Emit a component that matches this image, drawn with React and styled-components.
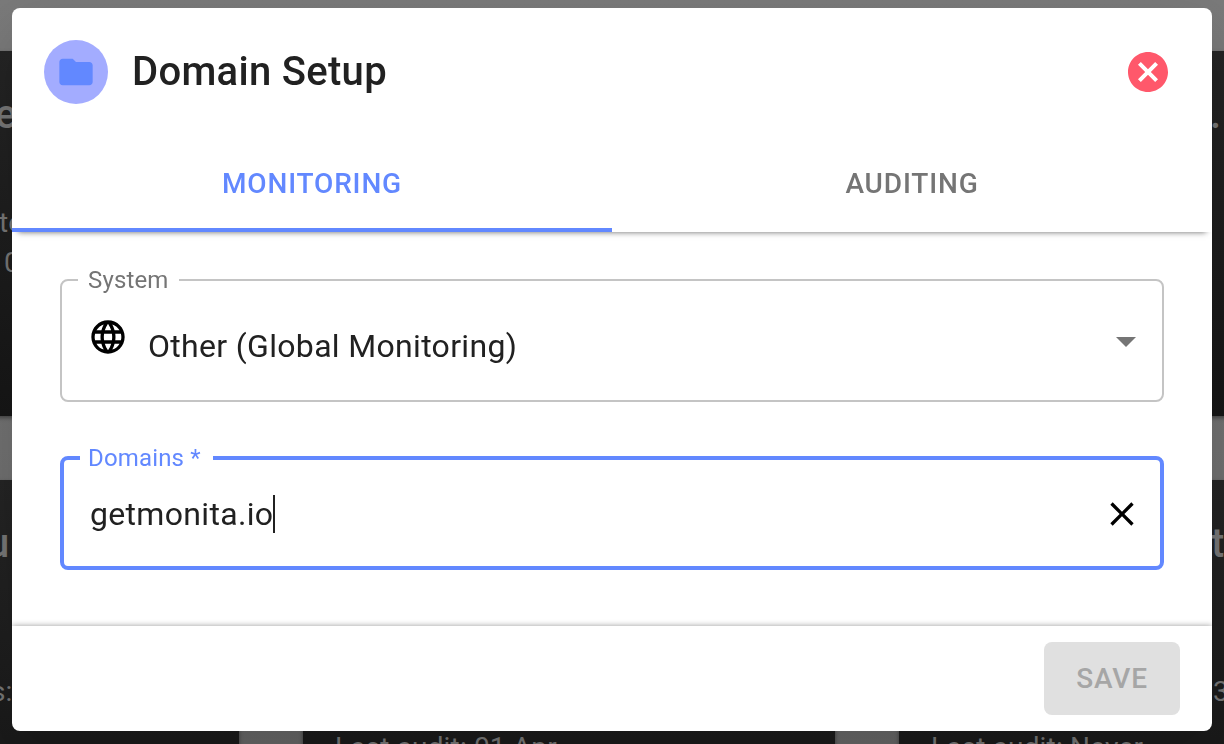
import React from 'react';
import styled, { createGlobalStyle, css } from 'styled-components';
import { MdFolder, MdLanguage, MdArrowDropDown, MdCancel, MdClose } from 'react-icons/md';

const GlobalStyle = createGlobalStyle`
  * { box-sizing: border-box; }
  body {
    margin: 0;
    font-family: Roboto, sans-serif;
    color: #212121;
    letter-spacing: 0.01em;
  }
`;

const Page = styled.div`
  height: 100vh;
  overflow: hidden;
  padding-top: 51px;
  background: linear-gradient(to bottom, #7a7a7a, #707070 60%, #646464);
`;

const CardGrid = styled.div`
  display: grid;
  grid-template-columns: repeat(3, 532px);
  grid-template-rows: 365px 365px;
  gap: 64px;
  margin-left: -293px;
`;

const Card = styled.div`
  padding-top: 40px;
  overflow: hidden;
  white-space: nowrap;
  color: #757575;
  background: linear-gradient(to bottom, #242424, #161616);
  box-shadow: 0 2px 4px rgba(0, 0, 0, 0.4);
`;

const CardTitle = styled.div`
  height: 112px;
  padding-left: ${props => props.$inset || 32}px;
  font-size: 40px;
  font-weight: 500;
  line-height: 48px;
`;

const CardLine = styled.div`
  height: 40px;
  padding-left: ${props => props.$inset || 32}px;
  font-size: 28px;
  line-height: 40px;
`;

const CardSpace = styled.div`
  height: ${props => props.$height}px;
`;

const Overlay = styled.div`
  position: fixed;
  inset: 0;
  padding: 8px 12px 13px;
  display: flex;
`;

const Dialog = styled.form`
  flex: 1;
  display: flex;
  flex-direction: column;
  overflow: hidden;
  background: #fff;
  border-radius: 8px;
  box-shadow: 0 22px 60px rgba(0, 0, 0, 0.15);
`;

const Header = styled.header`
  display: flex;
  align-items: center;
  padding: 32px 40px 32px 32px;
`;

const Avatar = styled.div`
  display: flex;
  align-items: center;
  justify-content: center;
  width: 64px;
  height: 64px;
  border-radius: 50%;
  background: #a3acff;
  color: #6288ff;
  font-size: 40px;
`;

const Title = styled.h2`
  flex: 1;
  margin: 0 0 0 24px;
  font-size: 40px;
  font-weight: 500;
  line-height: 64px;
  letter-spacing: 0.0075em;
`;

const IconButton = styled.button`
  display: flex;
  padding: 0;
  border: 0;
  background: none;
  color: ${props => props.$color};
  font-size: ${props => props.$size}px;
  cursor: pointer;
`;

const Tabs = styled.div`
  display: flex;
  box-shadow: 0 6px 6px -6px rgba(0, 0, 0, 0.6);
`;

const Tab = styled.button`
  flex: 1;
  height: 96px;
  padding: 2px 0 0;
  border: 0;
  border-bottom: 4px solid transparent;
  background: none;
  font-family: inherit;
  font-size: 28px;
  font-weight: 500;
  letter-spacing: 0.03em;
  text-transform: uppercase;
  color: #757575;
  cursor: pointer;

  ${props =>
    props.$selected &&
    css`
      color: #6288ff;
      border-bottom-color: #6288ff;
    `};
`;

const Content = styled.div`
  flex: 1;
  display: flex;
  flex-direction: column;
  gap: 44px;
  padding: 36px 48px 0;
`;

const Outline = styled.fieldset`
  display: flex;
  align-items: center;
  min-width: 0;
  height: ${props => props.$height}px;
  margin: 0;
  padding: 24px 12px 0 26px;
  border: 2px solid #c4c4c4;
  border-radius: 8px;

  ${props =>
    props.$focused &&
    css`
      padding-right: 18px;
      border: 4px solid #6288ff;
    `};
`;

const Legend = styled.legend`
  margin-left: -10px;
  padding: 0 10px;
  font-size: 24px;
  line-height: 24px;
  color: #757575;

  ${props =>
    props.$focused &&
    css`
      padding: 0 12px 0 8px;
      color: #6288ff;
    `};
`;

const GlobeIcon = styled(MdLanguage)`
  flex: none;
  margin-bottom: 8px;
  color: #000;
  font-size: 40px;
`;

const fieldText = css`
  min-width: 0;
  padding: 0;
  border: 0;
  outline: 0;
  background: none;
  font-family: inherit;
  font-size: 32px;
  line-height: 40px;
  letter-spacing: 0.01em;
  color: #212121;
`;

const Select = styled.select`
  ${fieldText}
  flex: 1;
  margin-top: 10px;
  padding-left: 20px;
  appearance: none;
`;

const SelectArrow = styled(MdArrowDropDown)`
  flex: none;
  color: #757575;
  font-size: 48px;
`;

const InputBox = styled.div`
  flex: 1;
  display: flex;
  align-items: center;
`;

const Input = styled.input`
  ${fieldText}
  field-sizing: content;
  caret-color: transparent;
`;

const Caret = styled.span`
  width: 2px;
  height: 38px;
  background: #212121;
`;

const Footer = styled.footer`
  display: flex;
  justify-content: flex-end;
  padding: 16px 32px;
  box-shadow: 0 0 6px rgba(0, 0, 0, 0.4);
`;

const SaveButton = styled.button`
  width: 136px;
  height: 73px;
  border: 0;
  border-radius: 8px;
  background: #e0e0e0;
  color: #a6a6a6;
  font-family: inherit;
  font-size: 28px;
  font-weight: 500;
  letter-spacing: 0.03em;
  text-transform: uppercase;
`;

const Background = () =>
  <Page aria-hidden="true">
    <CardGrid>
      <Card>
        <CardTitle $inset={288}>e</CardTitle>
        <CardLine $inset={292}>te</CardLine>
        <CardLine $inset={297}>0</CardLine>
      </Card>
      <Card />
      <Card>
        <CardTitle $inset={311}>.</CardTitle>
      </Card>
      <Card>
        <CardTitle $inset={280}>u</CardTitle>
        <CardSpace $height={40} />
        <CardLine $inset={284}>s:</CardLine>
      </Card>
      <Card>
        <CardSpace $height={208} />
        <CardLine>Last audit: 01 Apr</CardLine>
      </Card>
      <Card>
        <CardTitle $inset={312}>ta</CardTitle>
        <CardSpace $height={40} />
        <CardLine $inset={314}>3</CardLine>
        <CardSpace $height={16} />
        <CardLine>Last audit: Never</CardLine>
      </Card>
    </CardGrid>
  </Page>;

const App = () =>
  <>
    <GlobalStyle />
    <Background />
    <Overlay>
      <Dialog role="dialog" aria-labelledby="dialog-title" onSubmit={e => e.preventDefault()}>
        <Header>
          <Avatar><MdFolder /></Avatar>
          <Title id="dialog-title">Domain Setup</Title>
          <IconButton type="button" $color="#ff586b" $size={48} aria-label="Close dialog">
            <MdCancel />
          </IconButton>
        </Header>

        <Tabs role="tablist">
          <Tab type="button" role="tab" aria-selected="true" $selected>Monitoring</Tab>
          <Tab type="button" role="tab" aria-selected="false">Auditing</Tab>
        </Tabs>

        <Content>
          <Outline $height={134}>
            <Legend><label htmlFor="system">System</label></Legend>
            <GlobeIcon />
            <Select id="system" defaultValue="other">
              <option value="other">Other (Global Monitoring)</option>
            </Select>
            <SelectArrow />
          </Outline>

          <Outline $height={124} $focused>
            <Legend $focused><label htmlFor="domains">Domains *</label></Legend>
            <InputBox>
              <Input id="domains" type="text" defaultValue="getmonita.io" required autoFocus />
              <Caret />
            </InputBox>
            <IconButton type="button" $color="#000" $size={40} aria-label="Clear domains">
              <MdClose />
            </IconButton>
          </Outline>
        </Content>

        <Footer>
          <SaveButton type="submit" disabled>Save</SaveButton>
        </Footer>
      </Dialog>
    </Overlay>
  </>;

export default App;
